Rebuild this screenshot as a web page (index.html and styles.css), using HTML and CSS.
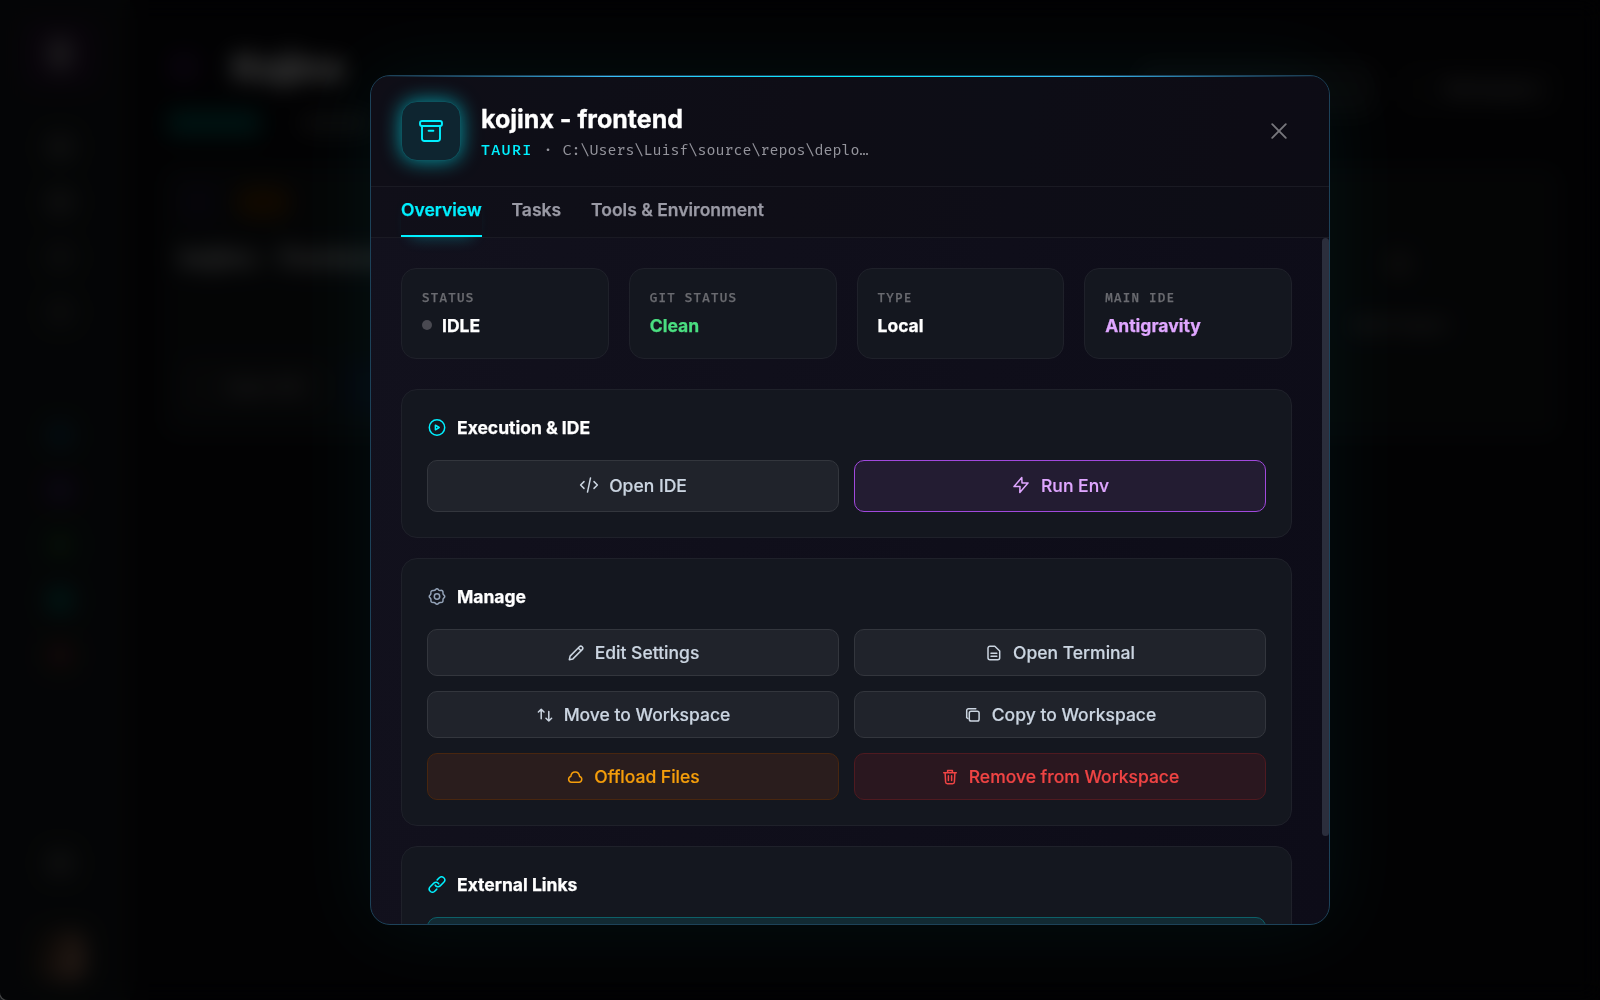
FILE: index.html
```html
<!DOCTYPE html>
<html lang="en">
<head>
    <meta charset="UTF-8">
    <title>Kojinx</title>
    <link rel="stylesheet" href="styles.css">
</head>
<body>
<div class="app">
    <aside class="sidebar">
        <div class="logo"><span></span></div>
        <nav class="nav">
            <i class="dot"></i>
            <i class="dot"></i>
            <i class="dot dim"></i>
            <i class="dot dim"></i>
        </nav>
        <nav class="nav apps">
            <i class="dot blue"></i>
            <i class="dot purple"></i>
            <i class="dot green"></i>
            <i class="dot teal"></i>
            <i class="dot red"></i>
        </nav>
        <i class="dot bottom"></i>
        <div class="avatar"></div>
    </aside>
    <main class="page">
        <div class="page-head">
            <div>
                <h1><i class="mark"></i>Kojinx</h1>
                <div class="page-tabs"><b></b><span></span></div>
            </div>
            <div class="page-actions"><span class="wide"></span><span>Workspace</span></div>
        </div>
        <div class="projects">
            <div class="project">
                <div class="badges"><i></i><b></b></div>
                <h2>kojinx - frontend</h2>
                <div class="project-actions"><span>Open IDE</span><span class="run"></span></div>
            </div>
            <div class="project add"><i class="plus"></i><span>Add Project</span></div>
        </div>
    </main>
</div>

<div class="overlay">
    <div class="modal">
        <header class="modal-header">
            <div class="modal-icon">
                <svg class="bold" width="26" height="26" viewBox="0 0 26 26">
                    <rect x="2" y="3" width="22" height="5" rx="2"/>
                    <path d="M4 8v12.5A2.5 2.5 0 0 0 6.5 23h13a2.5 2.5 0 0 0 2.5-2.5V8M10.6 12.8h4.8"/>
                </svg>
            </div>
            <div class="modal-title">
                <h2>kojinx - frontend</h2>
                <p><span class="stack">TAURI</span><span class="sep">·</span><span>C:\Users\Luisf\source\repos\deplo…</span></p>
            </div>
            <button class="close">
                <svg class="bold" width="20" height="20" viewBox="0 0 20 20"><path d="M3.2 3.2l13.6 13.6M16.8 3.2L3.2 16.8"/></svg>
            </button>
        </header>

        <nav class="tabs">
            <a class="tab active">Overview</a>
            <a class="tab">Tasks</a>
            <a class="tab">Tools &amp; Environment</a>
        </nav>

        <div class="modal-body">
            <div class="content">
                <div class="stats">
                    <div class="stat">
                        <div class="label">STATUS</div>
                        <div class="value"><i class="status-dot"></i>IDLE</div>
                    </div>
                    <div class="stat">
                        <div class="label">GIT STATUS</div>
                        <div class="value clean">Clean</div>
                    </div>
                    <div class="stat">
                        <div class="label">TYPE</div>
                        <div class="value">Local</div>
                    </div>
                    <div class="stat">
                        <div class="label">MAIN IDE</div>
                        <div class="value ide">Antigravity</div>
                    </div>
                </div>

                <section class="panel">
                    <h3>
                        <svg class="cyan" width="20" height="20" viewBox="0 0 20 20"><circle cx="10" cy="9.5" r="7.7"/><path d="M8.4 7.2v4.6l3.8-2.3z"/></svg>
                        Execution &amp; IDE
                    </h3>
                    <div class="buttons large">
                        <button class="btn">
                            <svg width="20" height="20" viewBox="0 0 20 20"><path d="M5 6.6L1.6 10 5 13.4M15 6.6l3.4 3.4-3.4 3.4M11.5 2.9l-3 14.2"/></svg>
                            Open IDE
                        </button>
                        <button class="btn run">
                            <svg width="20" height="20" viewBox="0 0 20 20"><path d="M10.8 2.6L3 11.6h6l-.2 5.9 8.2-9.6h-6z"/></svg>
                            Run Env
                        </button>
                    </div>
                </section>

                <section class="panel">
                    <h3>
                        <svg class="slate" width="20" height="20" viewBox="0 0.5 20 20">
                            <path d="M8.4 3.4Q10 1.2 11.6 3.4Q12.2 4.1 13.5 3.9Q16.2 3.6 16 6.3Q15.8 7.7 16.7 8.4Q18.8 10 16.7 11.6Q15.8 12.3 16 13.6Q16.3 16.3 13.6 16.1Q12.3 15.9 11.6 16.7Q10 18.8 8.4 16.7Q7.7 15.9 6.4 16.1Q3.7 16.3 3.9 13.6Q4.1 12.3 3.3 11.6Q1.2 10 3.3 8.4Q4.1 7.7 3.9 6.4Q3.7 3.7 6.4 3.9Q7.7 4.1 8.4 3.4z"/>
                            <circle cx="10" cy="10" r="2.7"/>
                        </svg>
                        Manage
                    </h3>
                    <div class="buttons">
                        <button class="btn">
                            <svg width="18" height="18" viewBox="0 0 18 18"><path d="M2.3 15.7l.8-3.6L12.4 2.8a1.95 1.95 0 0 1 2.8 2.8L5.9 14.9zM11.2 4l2.8 2.8"/></svg>
                            Edit Settings
                        </button>
                        <button class="btn">
                            <svg width="18" height="18" viewBox="0 0 18 18"><path d="M5 2.2h4.8L14.7 7v6.8a2 2 0 0 1-2 2H5a2 2 0 0 1-2-2V4.2a2 2 0 0 1 2-2zM6 9.3h5.8M6 12.2h5.8"/></svg>
                            Open Terminal
                        </button>
                        <button class="btn">
                            <svg width="18" height="18" viewBox="0 0 18 18"><path d="M5.2 12.8V3.2M2.4 6l2.8-2.8L8 6M12.8 5.4V15M10 12.2l2.8 2.8 2.8-2.8"/></svg>
                            Move to Workspace
                        </button>
                        <button class="btn">
                            <svg width="18" height="18" viewBox="0 0 18 18"><rect x="5.3" y="5.3" width="9.8" height="9.8" rx="1.8"/><path d="M2.7 11.6V4.5a1.8 1.8 0 0 1 1.8-1.8h7.3M2.7 11.6l1.2.9"/></svg>
                            Copy to Workspace
                        </button>
                        <button class="btn offload">
                            <svg width="18" height="18" viewBox="0 0 18 18"><path d="M5.4 14.2a2.9 2.9 0 0 1-.6-5.7C5.1 5.8 6.9 4 9.2 4s4.1 1.8 4.4 4.5a2.9 2.9 0 0 1-.6 5.7z"/></svg>
                            Offload Files
                        </button>
                        <button class="btn remove">
                            <svg width="18" height="18" viewBox="0 0 18 18"><path d="M2.7 4.7h12.6M6.6 4.5V2.4h4.8v2.1M4.1 4.8l.5 9.2a1.8 1.8 0 0 0 1.8 1.7h5.2a1.8 1.8 0 0 0 1.8-1.7l.5-9.2M7.4 7.8v4.8M10.6 7.8v4.8"/></svg>
                            Remove from Workspace
                        </button>
                    </div>
                </section>

                <section class="panel">
                    <h3>
                        <svg class="cyan" width="20" height="20" viewBox="0 0.5 20 20"><path d="M10.2 5.4l2.1-2.1a3.1 3.1 0 0 1 4.5 4.5l-3.6 3.6a3.1 3.1 0 0 1-5-.8M9.8 14.6l-2.1 2.1a3.1 3.1 0 0 1-4.5-4.5l3.6-3.6a3.1 3.1 0 0 1 5 .8"/></svg>
                        External Links
                    </h3>
                    <div class="links"><button class="btn link"></button></div>
                </section>
            </div>
            <div class="scrollbar"></div>
        </div>
    </div>
</div>
</body>
</html>
```
FILE: styles.css
```css
* {
    box-sizing: border-box;
}

body {
    margin: 0;
    height: 100vh;
    overflow: hidden;
    background: #000;
    color: #fff;
    font-family: Inter, "Liberation Sans", sans-serif;
    font-size: 17.5px;
}

h1, h2, h3, p {
    margin: 0;
}

svg {
    display: block;
    flex: none;
    fill: none;
    stroke: currentColor;
    stroke-width: 1.5;
    stroke-linecap: round;
    stroke-linejoin: round;
}

svg.bold {
    stroke-width: 1.9;
}

button {
    font: inherit;
}

/* app behind the modal */
.app {
    display: flex;
    height: 100vh;
    background: #08080c;
}

.sidebar {
    width: 130px;
    padding: 20px 10px 20px 0;
    display: flex;
    flex-direction: column;
    align-items: center;
    background: #131719;
}

.logo {
    width: 76px;
    height: 68px;
    margin-bottom: 46px;
    display: flex;
    align-items: center;
    justify-content: center;
    border-radius: 16px;
    background: #201029;
}

.logo span {
    width: 26px;
    height: 34px;
    border-radius: 8px;
    background: #67616a;
}

.nav {
    display: flex;
    flex-direction: column;
    gap: 29px;
}

.dot {
    width: 26px;
    height: 26px;
    border-radius: 8px;
    background: #3c3e40;
}

.nav.apps {
    margin-top: 97px;
}

.dot.dim { background: #2e3032; }
.dot.blue { background: #0b3444; }
.dot.purple { background: #2c184c; }
.dot.green { background: #143e1e; }
.dot.teal { background: #005650; }
.dot.red { background: #482020; }

.dot.bottom {
    margin: auto 0 54px;
}

.avatar {
    width: 50px;
    height: 50px;
    border-radius: 12px;
    background: linear-gradient(110deg, #2a2018 20%, #b07c64);
}

.page {
    flex: 1;
    padding: 40px 38px 0 30px;
}

.page-head {
    display: flex;
    justify-content: space-between;
    height: 124px;
    padding-left: 8px;
}

.page-head h1 {
    display: flex;
    align-items: center;
    gap: 32px;
    height: 54px;
    font-size: 38px;
    font-weight: 800;
    letter-spacing: -1px;
}

.mark {
    width: 32px;
    height: 32px;
    border-radius: 8px;
    background: #221030;
}

.page-tabs {
    display: flex;
    gap: 40px;
    margin-top: 16px;
}

.page-tabs b {
    width: 92px;
    height: 26px;
    background: #00504c;
}

.page-tabs span {
    width: 70px;
    height: 18px;
    margin-top: 4px;
    background: #303030;
}

.page-actions {
    display: flex;
    gap: 20px;
    margin-top: 22px;
    color: #aaa;
}

.page-actions span {
    height: 54px;
    padding: 16px 24px 16px 48px;
    border-radius: 12px;
    background: #101013;
}

.page-actions .wide {
    width: 240px;
    background: #1b1c1f;
}

.projects {
    display: grid;
    grid-template-columns: repeat(4, 1fr);
    gap: 24px;
}

.project {
    height: 276px;
    padding: 20px;
    border-radius: 16px;
    background: #111417;
}

.badges {
    display: flex;
    gap: 20px;
}

.badges i {
    width: 36px;
    height: 36px;
    background: #1a152a;
}

.badges b {
    width: 54px;
    height: 32px;
    margin-top: 2px;
    border-radius: 12px;
    background: #462600;
}

.project h2 {
    margin-top: 22px;
    font-size: 26px;
    white-space: nowrap;
    color: #d4d4d4;
}

.project-actions {
    display: flex;
    gap: 14px;
    margin-top: 87px;
    color: #999;
}

.project-actions span {
    width: 150px;
    height: 54px;
    padding: 16px 20px 16px 46px;
    border-radius: 10px;
    background: #1a1c1f;
}

.project-actions .run {
    background: #10182e;
}

.add {
    grid-column: 4;
    display: flex;
    flex-direction: column;
    align-items: center;
    gap: 36px;
    padding-top: 86px;
    color: #999;
}

.plus {
    width: 28px;
    height: 28px;
    border-radius: 50%;
    background: #303030;
}

/* modal */
.overlay {
    position: fixed;
    inset: 0;
    display: flex;
    align-items: center;
    justify-content: center;
    padding-left: 100px;
    border-bottom-left-radius: 8px;
    background: rgba(0, 0, 0, 0.75);
    backdrop-filter: blur(11px);
    box-shadow: -1px 1px 0 #444;
}

.modal {
    position: relative;
    display: flex;
    flex-direction: column;
    width: 960px;
    height: 850px;
    border: 1px solid #1d4259;
    border-radius: 20px;
    overflow: hidden;
    background: linear-gradient(100deg, #12111d, #0d0c18);
    box-shadow: 0 0 80px rgba(0, 240, 255, 0.06);
}

.modal::before {
    content: "";
    position: absolute;
    top: 0;
    left: 0;
    right: 0;
    height: 1px;
    background: linear-gradient(90deg, transparent, #38bdf8, #00f0ff, #38bdf8, transparent);
}

.modal-header {
    display: flex;
    align-items: center;
    height: 111px;
    padding: 0 30px;
    border-bottom: 1px solid #1a1a23;
    background: rgba(12, 12, 18, 0.5);
}

.modal-icon {
    display: flex;
    align-items: center;
    justify-content: center;
    width: 60px;
    height: 60px;
    border: 1px solid #0d535e;
    border-radius: 16px;
    background: #0e2530;
    color: #00f0ff;
    box-shadow: 0 0 20px rgba(0, 240, 255, 0.6);
}

.modal-title {
    flex: 1;
    margin-left: 20px;
    padding-top: 1px;
}

.modal-title h2 {
    font-size: 25px;
    line-height: 32px;
    -webkit-text-stroke: 0.3px;
}

.modal-title p {
    display: flex;
    margin-top: 4px;
    font-family: "Fira Mono", "Fira Code", monospace;
    font-size: 15px;
    line-height: 22px;
    color: #94949c;
}

.stack {
    font-weight: 500;
    letter-spacing: 1.3px;
    color: #00f0ff;
}

.sep {
    margin: 0 10px 0 11px;
}

.close {
    display: flex;
    padding: 10px;
    border: 0;
    background: none;
    color: #77777c;
}

.tabs {
    display: flex;
    gap: 30px;
    height: 51px;
    padding: 0 30px;
    border-bottom: 1px solid #1a1a23;
    background: rgba(12, 12, 18, 0.3);
}

.tab {
    height: 50px;
    padding-top: 12px;
    border-bottom: 2px solid transparent;
    font-weight: 600;
    line-height: 22px;
    color: #9a9aa5;
    -webkit-text-stroke: 0.25px;
}

.tab.active {
    border-bottom-color: #00f0ff;
    color: #00f0ff;
    box-shadow: 0 10px 15px -10px rgba(0, 240, 255, 0.3);
}

.modal-body {
    flex: 1;
    display: flex;
    min-height: 0;
}

.content {
    flex: 1;
    padding: 30px;
    overflow: hidden;
}

.scrollbar {
    width: 7px;
    height: 598px;
    border-radius: 4px;
    background: #2b2e3c;
}

.stats {
    display: grid;
    grid-template-columns: repeat(4, 1fr);
    gap: 20px;
    margin-bottom: 30px;
}

.stat {
    height: 91px;
    padding: 19px 20px;
    border: 1px solid #1f212a;
    border-radius: 15px;
    background: #14171f;
}

.label {
    font-family: "Fira Mono", "Fira Code", monospace;
    font-size: 12.5px;
    font-weight: 500;
    line-height: 19px;
    letter-spacing: 1.25px;
    color: #6a6b70;
    -webkit-text-stroke: 0.25px;
}

.value {
    display: flex;
    align-items: center;
    gap: 10px;
    margin-top: 6px;
    font-weight: 700;
    line-height: 25px;
    -webkit-text-stroke: 0.25px;
}

.status-dot {
    width: 10px;
    height: 10px;
    margin-top: -1px;
    border-radius: 50%;
    background: #494951;
}

.clean { color: #4ade80; }
.ide { color: #dfa6ff; }

.panel {
    margin-bottom: 20px;
    padding: 25px;
    border: 1px solid #1f212a;
    border-radius: 16px;
    background: #14171f;
}

.panel h3 {
    display: flex;
    align-items: center;
    gap: 10px;
    margin-bottom: 20px;
    font-size: 17.5px;
    font-weight: 700;
    line-height: 25px;
    -webkit-text-stroke: 0.25px;
}

.cyan { color: #00f0ff; }
.slate { color: #94a3b8; }

.buttons {
    display: grid;
    grid-template-columns: 1fr 1fr;
    gap: 15px;
}

.btn {
    display: flex;
    align-items: center;
    justify-content: center;
    gap: 10px;
    height: 47px;
    border: 1px solid #33363d;
    border-radius: 10px;
    background: #20232b;
    color: #cbd5e1;
    font-weight: 500;
    -webkit-text-stroke: 0.2px;
}

.large .btn {
    height: 52px;
    padding-bottom: 3px;
}

.btn.run {
    border-color: #a149dd;
    background: #231c32;
    color: #dfa6ff;
}

.btn.offload {
    border-color: #48260f;
    background: #2a1d1d;
    color: #f59e0b;
}

.btn.remove {
    border-color: #4f1a20;
    background: #2a171f;
    color: #ef4444;
}

.btn.link {
    width: 100%;
    border-color: #0d6068;
    background: #122a33;
}
```
